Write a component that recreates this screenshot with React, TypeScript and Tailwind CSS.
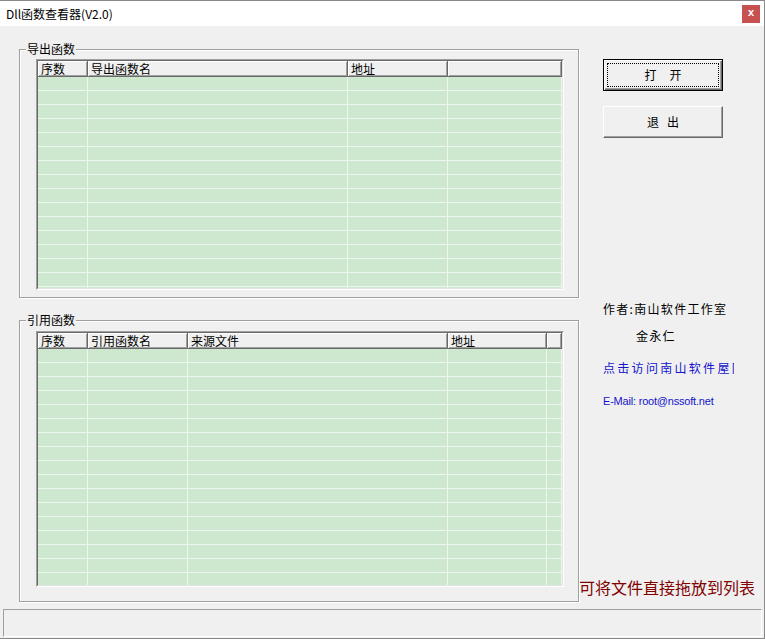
import React from 'react';

const CJK = "font-['Noto_Sans_CJK_SC',sans-serif]";

interface Column {
  title: string;
  width?: number;
}

const exportCols: Column[] = [
  { title: '序数', width: 50 },
  { title: '导出函数名', width: 260 },
  { title: '地址', width: 100 },
  { title: '' },
];

const importCols: Column[] = [
  { title: '序数', width: 50 },
  { title: '引用函数名', width: 100 },
  { title: '来源文件', width: 260 },
  { title: '地址', width: 99 },
  { title: '' },
];

const GroupBox = ({
  label,
  className,
  children,
}: {
  label: string;
  className: string;
  children: React.ReactNode;
}) => (
  <div
    className={`relative w-[560px] border border-[#a0a0a0] shadow-[1px_1px_0_#fff,inset_1px_1px_0_#fff] ${className}`}
  >
    <span className="absolute left-[6px] -top-[9px] bg-[#f0f0f0] px-[1px] leading-[16px]">
      {label}
    </span>
    {children}
  </div>
);

const ListView = ({
  cols,
  rows,
  className,
}: {
  cols: Column[];
  rows: number;
  className: string;
}) => (
  <div
    className={`w-[528px] border border-t-[#a0a0a0] border-l-[#a0a0a0] border-r-white border-b-white ${className}`}
  >
    <div className="flex h-full flex-col overflow-hidden border border-t-[#696969] border-l-[#696969] border-r-[#e3e3e3] border-b-[#e3e3e3] bg-[#cde8cf]">
      <div className="flex h-[16px] shrink-0 bg-[#f0f0f0]">
        {cols.map((c, i) => (
          <div
            key={i}
            style={c.width ? { width: c.width } : undefined}
            className={`${c.width ? 'shrink-0' : 'flex-1'} h-full border-r border-b border-[#696969] pl-[3px] leading-[15px] shadow-[inset_1px_1px_0_#fff,inset_-1px_-1px_0_#a0a0a0]`}
          >
            {c.title}
          </div>
        ))}
      </div>
      {Array.from({ length: rows }).map((_, r) => (
        <div key={r} className="flex h-[14px] shrink-0">
          {cols.map((c, i) => (
            <div
              key={i}
              style={c.width ? { width: c.width } : undefined}
              className={`${c.width ? 'shrink-0' : 'flex-1'} h-full border-r border-b border-[#eef7ef]`}
            />
          ))}
        </div>
      ))}
    </div>
  </div>
);

export default function App() {
  return (
    <div
      className={`flex h-[639px] w-[765px] flex-col overflow-hidden border-t border-r border-b border-[#8a8a8a] bg-[#f0f0f0] text-[12px] text-black ${CJK}`}
    >
      {/* title bar */}
      <div className="flex h-[25px] shrink-0 items-center justify-between bg-white pl-[6px] pr-[4px]">
        <span className="leading-[16px]">Dll函数查看器(V2.0)</span>
        <div className="flex h-[18px] w-[18px] items-center justify-center bg-[#c75050] pb-[2px] font-['Liberation_Sans',sans-serif] text-[11px] font-bold text-white">
          x
        </div>
      </div>

      {/* client */}
      <div className="flex h-[583px] shrink-0">
        <div className="flex flex-col pl-[19px] pt-[23px]">
          <GroupBox label="导出函数" className="h-[249px]">
            <ListView cols={exportCols} rows={16} className="ml-[16px] mt-[9px] h-[231px]" />
          </GroupBox>
          <GroupBox label="引用函数" className="mt-[22px] h-[282px]">
            <ListView cols={importCols} rows={18} className="ml-[16px] mt-[10px] h-[256px]" />
          </GroupBox>
        </div>

        <div className="flex flex-1 flex-col pt-[33px]">
          <button className="ml-[24px] h-[32px] w-[120px] border border-black bg-[#f0f0f0] p-[3px] shadow-[inset_1px_1px_0_#fff,inset_-1px_-1px_0_#696969,inset_-2px_-2px_0_#a0a0a0]">
            <span className="flex h-full w-full items-center justify-center gap-[13px] border border-dotted border-black leading-[16px]">
              <span>打</span>
              <span>开</span>
            </span>
          </button>
          <button className="ml-[24px] mt-[15px] flex h-[32px] w-[120px] items-center justify-center gap-[8px] border border-t-white border-l-white border-r-[#696969] border-b-[#696969] bg-[#f0f0f0] leading-[16px] shadow-[inset_-1px_-1px_0_#a0a0a0]">
            <span>退</span>
            <span>出</span>
          </button>

          <div className="ml-[24px] mt-[163px] leading-[16px] tracking-[1.3px]">作者:南山软件工作室</div>
          <div className="ml-[57px] mt-[11px] leading-[16px] tracking-[1.3px]">金永仁</div>
          <div className="ml-[24px] mt-[16px] w-[131px] overflow-hidden whitespace-nowrap leading-[16px] tracking-[2.3px] text-[#1414cc]">
            点击访问南山软件屋网站
          </div>
          <div className="ml-[24px] mt-[18px] font-['Liberation_Sans',sans-serif] text-[11px] leading-[14px] tracking-[-0.2px] text-[#1414cc]">
            E-Mail: root@nssoft.net
          </div>

          <div className="mb-[12px] mt-auto whitespace-nowrap text-[16px] leading-[20px] text-[#800000]">
            可将文件直接拖放到列表
          </div>
        </div>
      </div>

      {/* status bar */}
      <div className="ml-[3px] mr-[2px] h-[28px] shrink-0 border border-t-[#a0a0a0] border-l-[#a0a0a0] border-r-white border-b-white" />
    </div>
  );
}
